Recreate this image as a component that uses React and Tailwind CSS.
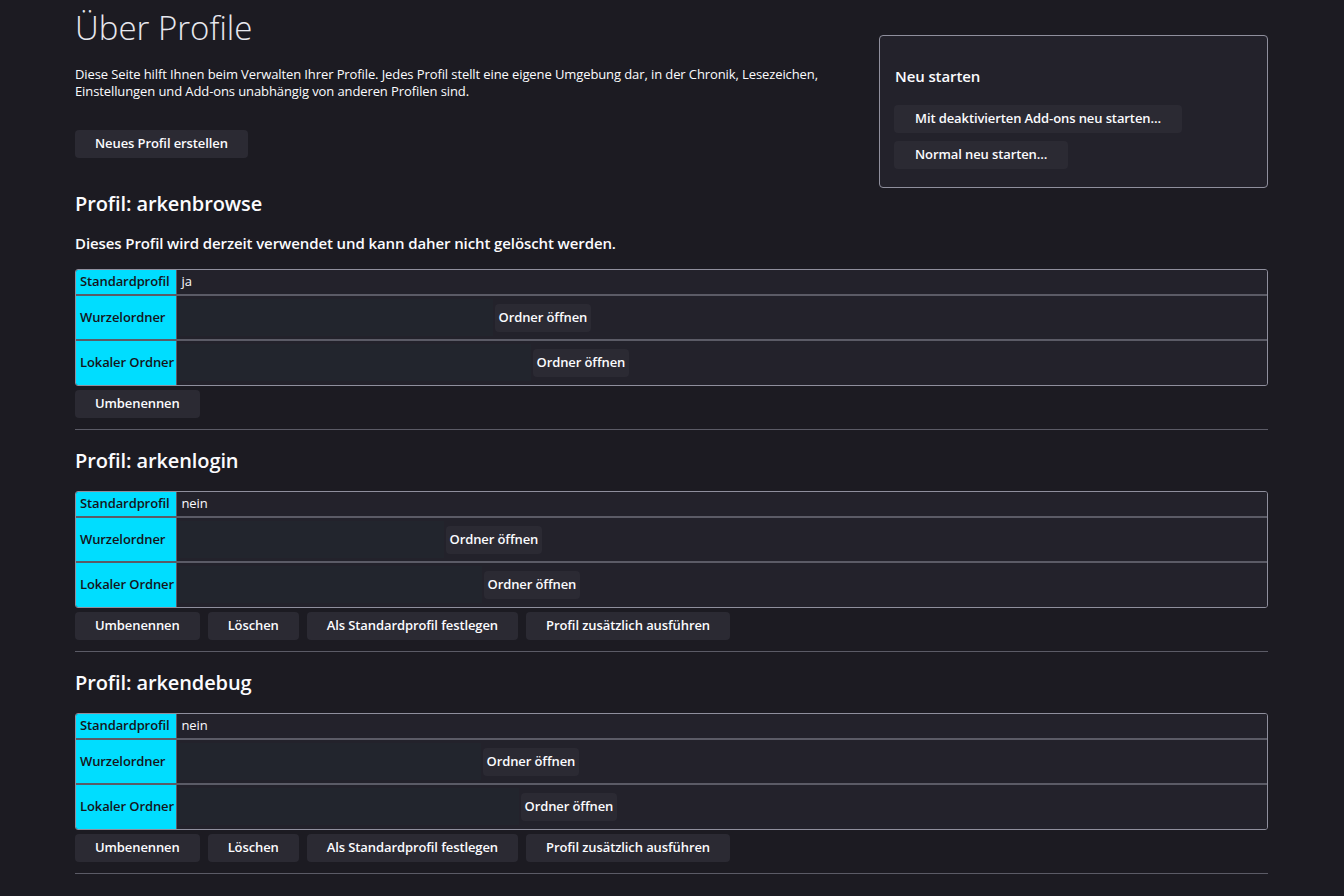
import React from 'react';

const profiles = [
  {
    name: 'arkenbrowse',
    current: true,
    isDefault: 'ja',
    rootPath: 314,
    localPath: 352,
  },
  {
    name: 'arkenlogin',
    current: false,
    isDefault: 'nein',
    rootPath: 265,
    localPath: 303,
  },
  {
    name: 'arkendebug',
    current: false,
    isDefault: 'nein',
    rootPath: 302,
    localPath: 340,
  },
];

const Btn = ({ children, className = '' }) => (
  <button className={`h-7 px-[20px] rounded bg-[#2b2a33] text-[13px] font-semibold text-[#fbfbfe] whitespace-nowrap ${className}`}>
    {children}
  </button>
);

const PathCell = ({ width, last }) => (
  <td className={`bg-[#23222b] px-[2px] ${last ? 'pt-[3px] pb-[4px]' : 'py-[3px]'}`}>
    <div className="flex items-center gap-[2px]">
      {/* path text, blanked out */}
      <div className="h-[37px] bg-[#22252d]" style={{ width }} />
      <button className="h-7 px-1 rounded bg-[#2b2a33] text-[13px] font-semibold text-[#fbfbfe] whitespace-nowrap">
        Ordner öffnen
      </button>
    </div>
  </td>
);

const Label = ({ children }) => (
  <th className="w-[100px] bg-[#00ddff] text-[#15141a] text-[13px] font-semibold text-left pl-[4px] pr-0 whitespace-nowrap border-r border-[#5b5b66]">
    {children}
  </th>
);

const Profile = ({ p, first }) => (
  <section>
    <h2 className={`text-[20px] font-semibold leading-[28px] text-[#fbfbfe] ${first ? 'mt-[2px]' : 'mt-[17px]'}`}>Profil: {p.name}</h2>
    {p.current && (
      <p className="text-[15px] font-semibold leading-[20px] mt-[15px] text-[#fbfbfe]">
        Dieses Profil wird derzeit verwendet und kann daher nicht gelöscht werden.
      </p>
    )}
    <div className="border border-[#8f8f9d] rounded-[3px] overflow-hidden mt-[16px]">
      <table className="w-full border-collapse table-fixed">
        <colgroup>
          <col className="w-[100px]" />
          <col />
        </colgroup>
        <tbody>
          <tr className="h-[25px] border-b-2 border-[#5b5b66]">
            <Label>Standardprofil</Label>
            <td className="bg-[#23222b] text-[13px] text-[#fbfbfe] px-[5px]">{p.isDefault}</td>
          </tr>
          <tr className="border-b-2 border-[#5b5b66]">
            <Label>Wurzelordner</Label>
            <PathCell width={p.rootPath} />
          </tr>
          <tr>
            <Label>Lokaler Ordner</Label>
            <PathCell width={p.localPath} last />
          </tr>
        </tbody>
      </table>
    </div>
    <div className="flex gap-2 mt-[4px]">
      <Btn>Umbenennen</Btn>
      {!p.current && (
        <>
          <Btn>Löschen</Btn>
          <Btn>Als Standardprofil festlegen</Btn>
          <Btn>Profil zusätzlich ausführen</Btn>
        </>
      )}
    </div>
    <div className="h-px bg-[#5b5b66] mt-[11px]" />
  </section>
);

export default function App() {
  return (
    <div className="min-h-screen bg-[#1c1b22] text-[#fbfbfe] pl-[75px] pr-[76px] tracking-[-0.1px]" style={{ fontFamily: '"Open Sans", "Noto Sans", sans-serif' }}>
      <div className="flex gap-4">
        <div className="flex-1">
          <h1 className="text-[33px] font-light leading-[44px] pt-[6px] text-[#e8e8ee] tracking-normal">Über Profile</h1>
          <p className="text-[13px] leading-[17px] mt-[16px] max-w-[760px]">
            Diese Seite hilft Ihnen beim Verwalten Ihrer Profile. Jedes Profil stellt eine eigene Umgebung dar, in der Chronik, Lesezeichen, Einstellungen und Add-ons unabhängig von anderen Profilen sind.
          </p>
          <Btn className="mt-[30px]">Neues Profil erstellen</Btn>
        </div>
        <div className="w-[389px] mt-[35px] h-[153px] border border-[#8f8f9d] rounded bg-[#23222b] px-[14px] pt-[30px]">
          <h3 className="text-[15px] font-semibold leading-[20px] ml-[1px]">Neu starten</h3>
          <div className="flex flex-col items-start gap-2 mt-[19px]">
            <Btn className="px-[21px]">Mit deaktivierten Add-ons neu starten…</Btn>
            <Btn className="px-[21px]">Normal neu starten…</Btn>
          </div>
        </div>
      </div>
      {profiles.map((p, i) => (
        <Profile key={p.name} p={p} first={i === 0} />
      ))}
    </div>
  );
}
